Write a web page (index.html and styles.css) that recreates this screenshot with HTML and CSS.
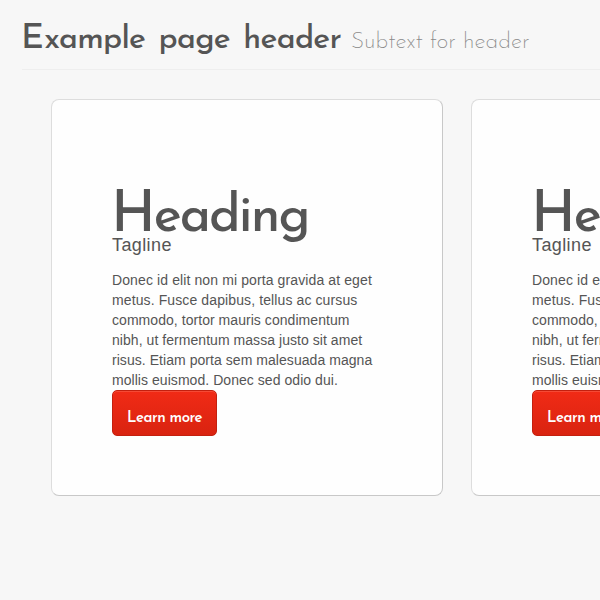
FILE: index.html
```html
<!DOCTYPE html>
<html lang="en">
<head>
<meta charset="utf-8">
<title>Example page header</title>
<link rel="stylesheet" href="styles.css">
</head>
<body>
<header class="page-header">
  <h1><span class="title">Example page header</span><small>Subtext for header</small></h1>
</header>
<main class="cards">
  <section class="hero-unit">
    <h2>Heading</h2>
    <p class="tagline">Tagline</p>
    <p class="copy"><span class="loose">Donec id elit non mi porta gravida at eget<br>metus. Fusce dapibus, tellus ac cursus</span><br>commodo, tortor mauris condimentum<br>nibh, ut fermentum massa justo sit amet<br>risus. Etiam porta sem malesuada magna<br>mollis euismod. Donec sed odio dui.</p>
    <a class="btn"><span>Learn more</span></a>
  </section>
  <section class="hero-unit">
    <h2>Heading</h2>
    <p class="tagline">Tagline</p>
    <p class="copy"><span class="loose">Donec id elit non mi porta gravida at eget<br>metus. Fusce dapibus, tellus ac cursus</span><br>commodo, tortor mauris condimentum<br>nibh, ut fermentum massa justo sit amet<br>risus. Etiam porta sem malesuada magna<br>mollis euismod. Donec sed odio dui.</p>
    <a class="btn"><span>Learn more</span></a>
  </section>
</main>
</body>
</html>
```
FILE: styles.css
```css
* { box-sizing: border-box; }
body {
  margin: 0;
  height: 600px;
  overflow: hidden;
  background: #f7f7f7;
  color: #555;
  font-family: "Liberation Sans", Arial, sans-serif;
}
h1, h2, p { margin: 0; }
h1, h2, .btn { font-family: "Josefin Sans", Lato, sans-serif; }
.page-header {
  height: 70px;
  margin-left: 22px;
  padding-top: 20px;
  border-bottom: 1px solid #eee;
}
h1 {
  display: flex;
  align-items: baseline;
  height: 40px;
  line-height: 40px;
  white-space: nowrap;
}
.title {
  width: 330px;
  margin-left: -1px;
  font-size: 32px;
  font-weight: 500;
  letter-spacing: -0.75px;
  word-spacing: 4px;
}
.title::first-letter { font-size: 35px; letter-spacing: 0.5px; }
small {
  color: #888;
  font-size: 23px;
  font-weight: 200;
  letter-spacing: 0.05px;
}
.cards {
  display: flex;
  gap: 28px;
  width: 812px;
  margin: 29px 0 0 51px;
}
.hero-unit {
  flex: 0 0 392px;
  height: 397px;
  padding: 85px 60px 0;
  background: #fefefe;
  border: 1px solid #ddd;
  border-right-color: #c8c8c8;
  border-bottom-color: #c8c8c8;
  border-radius: 8px;
}
h2 {
  height: 49px;
  margin-left: -1px;
  line-height: 63px;
  font-size: 53px;
  font-weight: 500;
  letter-spacing: -2px;
  white-space: nowrap;
}
h2::first-letter { font-size: 57px; }
.tagline {
  height: 36px;
  line-height: 22px;
  font-size: 18px;
  letter-spacing: 0.4px;
}
.copy {
  height: 120px;
  font-size: 14px;
  line-height: 20px;
  letter-spacing: 0.05px;
  white-space: nowrap;
}
.loose { letter-spacing: 0.11px; }
.btn {
  display: flex;
  align-items: center;
  width: 105px;
  height: 46px;
  padding: 10px 0 0 14px;
  border: 1px solid #c3200f;
  border-radius: 5px;
  background: linear-gradient(#f12b16, #d92310);
  box-shadow: inset 0 1px 0 #f54a35;
  color: #fff;
  font-size: 15px;
  font-weight: 600;
  letter-spacing: -0.5px;
  white-space: nowrap;
}
```
